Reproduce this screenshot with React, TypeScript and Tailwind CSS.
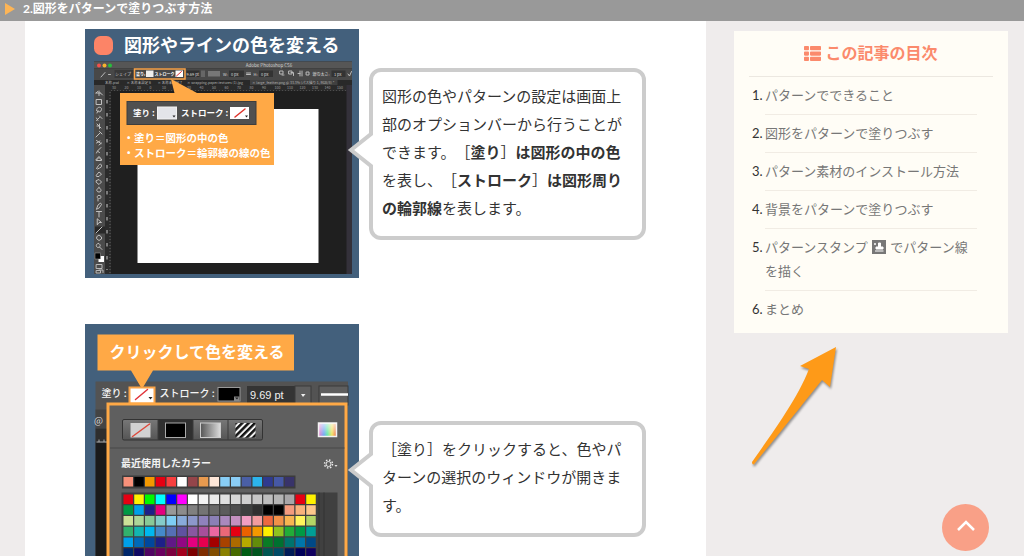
import React from "react";
import { FaThList } from "react-icons/fa";
import type { ReactNode } from "react";

const jp = "'Noto Sans CJK JP', sans-serif";

const recent = [
  "#f8917a", "#000000", "#f39800", "#e60012", "#f8403f", "#ffffff", "#94454a", "#e89a4f",
  "#fde6d8", "#88cdf5", "#8acdf6", "#4a5fa6", "#2cb4ec", "#2f3a8f", "#4658a5", "#38336a",
];

const palette: string[][] = [
  ["#e60012", "#fff100", "#00f800", "#00ffff", "#0000ff", "#ff00ff", "#ffffff", "#f2f2f2", "#e9e9e9", "#e0e0e0", "#d8d8d8", "#cfcfcf", "#c6c6c6", "#bdbdbd", "#b4b4b4", "#a8a6a8", "#e60012", "#fff100"],
  ["#009944", "#00a0e9", "#1d2088", "#e4007f", "#989898", "#8c8c8c", "#808080", "#747474", "#686868", "#5c5c5c", "#4e4e4e", "#3e403f", "#303030", "#000000", "#000000", "#f39b7e", "#f8b27c", "#fcc68b"],
  ["#cce198", "#acd598", "#89c997", "#84ccc9", "#7ecef4", "#88abda", "#8c97cb", "#8f82bc", "#8b80b6", "#aa89bd", "#c490bf", "#f19ec2", "#f29c9f", "#ec6941", "#f19149", "#f8b551", "#fff45c", "#b3d465"],
  ["#32b16c", "#13b5b1", "#00b7ee", "#448aca", "#556fb5", "#5f52a0", "#8957a1", "#a74f9b", "#ea68a2", "#eb6877", "#e60012", "#eb6100", "#f39800", "#fff100", "#8fc31f", "#22ac38", "#009944", "#009e96"],
  ["#00a0e9", "#0068b7", "#00479d", "#1d2088", "#601986", "#920783", "#e4007f", "#e5004f", "#a40000", "#a84200", "#ac6a00", "#b7aa00", "#638c0b", "#097c25", "#007130", "#00736d", "#0075a9", "#004986"],
  ["#00276b", "#100964", "#500563", "#6a005f", "#7d003f", "#a4001e", "#7d0000", "#7f2d00", "#834e00", "#8a8000", "#486a00", "#005e15", "#00561f", "#005752", "#004c66", "#001c58", "#00005a", "#100060"],
  ["#c7b299", "#998675", "#736357", "#534741", "#362f2c", "#c69c6d", "#a67c52", "#8c6239", "#754c24", "#603913", "#42210b", "#333333", "#444444", "#555555", "#666666", "#777777", "#888888", "#999999"],
];

function Lines({ d, color = "#b9b9b9", width = 2 }: { d: string; color?: string; width?: number }) {
  return <path d={d} fill="none" stroke={color} strokeWidth={width} strokeLinecap="round" strokeLinejoin="round" />;
}

const tools = [
  "M-6-2h9m-3-4v9m-6-5l3-3m6 3l4 4",
  "M-5-5h10v10h-10z",
  "M-5 1c0-9 11-8 10-2s-8 6-7 2l-2 5",
  "M-5 5l6-6m0-3l5 5M-5 0l3 5",
  "M-4-4l8 8m-8-4h5v5m0-9v3",
  "M-6 6l8-8m-1-3l5 5",
  "M-5-3l9 6m-9-1l7-4m-2 8l5-4",
  "M-5 6l2-4 7-7m-6 8l3 2",
  "M-5 5h10v-3h-3v-4h-4v4h-3z",
  "M-5 5l4-6c6-8 9 4 2 5l-4 2",
  "M-5 2l5-6 5 4-5 5h-4z",
  "M-5-3l5-2 5 5-5 5-5-4z",
  "M0-5c-7 4-5 9 0 9s6-5 0-9",
  "M-2 6v-5c-5-5 3-9 6-4 1 4-3 4-4 4",
  "M-5 6l3-8 5-4 2 3-4 6z",
  "M-5-5h10M0-5v11",
  "M-3-6l8 7h-5l-3 4z",
  "M-6 6l12-12",
  "M-4-3l4-3 5 4v4l-5 3-4-3z",
  "M-2-5a4 4 0 1 0 1 0zm3 7l5 5",
];

function OptionsBarFigure() {
  return (
    <svg viewBox="0 0 548 498" className="w-[274px] shrink-0" role="img" aria-label="図形やラインの色を変える" fontFamily={jp}>
      <rect width="548" height="498" fill="#43607c" />
      <rect x="18" y="14" width="38" height="38" rx="13" fill="#fc8467" />
      <text x="78" y="46" fontSize="36" fontWeight="700" fill="#fff">図形やラインの色を変える</text>
      <rect x="18" y="65" width="516" height="425" fill="#1f1f1f" />
      <rect x="18" y="65" width="516" height="14" fill="#565656" />
      <circle cx="28" cy="73" r="4" fill="#f4504c" />
      <circle cx="39" cy="73" r="4" fill="#f5b32f" />
      <circle cx="50" cy="73" r="4" fill="#27bf3c" />
      <text x="368" y="76" textAnchor="middle" fontSize="9" fill="#d0d0d0">Adobe Photoshop CS6</text>
      <rect x="18" y="79" width="516" height="23" fill="#484848" />
      <Lines d="M32 96l8-9M47 91h4" />
      <rect x="59" y="82" width="38" height="16" fill="#383838" />
      <g fontSize="8" fill="#d5d5d5">
        <text x="60" y="93">シェイプ</text>
        <text x="102" y="93" fontWeight="700" fill="#fff">塗り:</text>
        <text x="139" y="93" fontWeight="700" fill="#fff">ストローク</text>
      </g>
      <rect x="122" y="83" width="15" height="13" fill="#eee" />
      <rect x="181" y="83" width="15" height="13" fill="#fff" />
      <Lines d="M183 94l10-9" color="#e03030" />
      <rect x="203" y="83" width="26" height="13" fill="#2f2f2f" />
      <rect x="232" y="83" width="8" height="13" fill="#666" />
      <rect x="246" y="84" width="24" height="11" fill="#777" />
      <rect x="288" y="83" width="30" height="13" fill="#333" />
      <rect x="348" y="83" width="28" height="13" fill="#333" />
      <rect x="493" y="83" width="28" height="13" fill="#333" />
      <g fontSize="8" fill="#ddd">
        <text x="203" y="93">9.69 pt</text>
        <text x="276" y="93">W:</text>
        <text x="292" y="93">0 px</text>
        <text x="337" y="93">H:</text>
        <text x="352" y="93">0 px</text>
        <text x="455" y="93">線の太さ:</text>
        <text x="498" y="93">1 px</text>
      </g>
      <Lines d="M323 88h8m-8 3h8M390 84h6v6h-6zm4 8h4M408 84h6v6h-6zm4 3h5v6M426 89h4m0-5v10m4-10v10M443 86h5v6h-5zM526 90l3 4 4-9" />
      <rect x="18" y="102" width="516" height="10" fill="#292929" />
      <rect x="330" y="102" width="175" height="10" fill="#404040" />
      <g fontSize="7" fill="#b4b4b4">
        <text x="40" y="110">名称.psd</text>
        <text x="83" y="110">× 名称未設定 6</text>
        <text x="145" y="110">× 名称未設定 7</text>
        <text x="204" y="110">× wrapping-paper-textures (1).jpg</text>
        <text x="334" y="110">× large_feather.png @ 33.3% (パス描り 1, RGB/8) *</text>
      </g>
      <rect x="40" y="112" width="486" height="12" fill="#2b2b2b" />
      <path d="M52 123h470" stroke="#717171" strokeWidth="2" strokeDasharray="1 5" />
      <g fontSize="7" fill="#a0a0a0">
        {[30, 20, 10, 0, 10, 20, 30, 40, 50, 60, 70, 80, 90, 100, 110, 120, 130, 140, 150].map((n, i) => (
          <text key={i} x={54 + i * 25} y="120">{n}</text>
        ))}
      </g>
      <rect x="18" y="112" width="22" height="378" fill="#4b4b4b" />
      <rect x="40" y="124" width="12" height="366" fill="#2b2b2b" />
      <path d="M50 126v362" stroke="#777" strokeWidth="3" strokeDasharray="1 5" />
      <path d="M44 142v340" stroke="#7b7b7b" strokeWidth="4" strokeDasharray="7 19" />
      <rect x="20" y="395" width="20" height="14" fill="#282828" />
      {tools.map((d, i) => (
        <g key={i} transform={`translate(28 ${130 + i * 16})`}>
          <Lines d={d} color="#c0c0c0" />
        </g>
      ))}
      <rect x="27" y="454" width="11" height="12" fill="#fff" />
      <rect x="20" y="448" width="11" height="12" fill="#000" stroke="#aaa" />
      <Lines d="M23 471h11v8h-11z" />
      <Lines d="M23 483h8v5h-8zM28 482h8v5" />
      <rect x="105" y="160" width="362" height="308" fill="#fff" />
      <rect x="523" y="112" width="11" height="378" fill="#34313a" />
      <rect x="99" y="80" width="101" height="20" fill="none" stroke="#f9a348" strokeWidth="3" />
      <path d="M172 100l52 28h154v144H70V128h109z" fill="#ffa946" />
      <rect x="84" y="145" width="258" height="46" fill="#505050" stroke="#3d3d3d" strokeWidth="2" />
      <g fontSize="17" fontWeight="700" fill="#fff">
        <text x="96" y="174">塗り :</text>
        <text x="192" y="174">ストローク :</text>
      </g>
      <rect x="145" y="156" width="38" height="24" fill="#e3e4e9" stroke="#f2f2f2" strokeWidth="2" />
      <path d="M175 173h6l-3 4z" fill="#222" />
      <rect x="290" y="156" width="38" height="24" fill="#fff" />
      <Lines d="M300 176l20-16" color="#dd332b" width={3} />
      <path d="M320 173h6l-3 4z" fill="#222" />
      <g fontSize="21" fontWeight="700" fill="#fff">
        <text x="77" y="226">・塗り＝図形の中の色</text>
        <text x="77" y="256">・ストローク＝輪郭線の線の色</text>
      </g>
    </svg>
  );
}

function SwatchPanelFigure() {
  return (
    <svg viewBox="0 0 548 620" className="w-[274px] shrink-0" role="img" aria-label="クリックして色を変える" fontFamily={jp}>
      <defs>
        <linearGradient id="fade"><stop stopColor="#555" /><stop offset="1" stopColor="#ddd" /></linearGradient>
        <linearGradient id="button" x2="0" y2="1"><stop stopColor="#777" /><stop offset="1" stopColor="#555" /></linearGradient>
        <linearGradient id="rainbow"><stop stopColor="#f077c5" /><stop offset=".3" stopColor="#68a2f4" /><stop offset=".5" stopColor="#62e5a2" /><stop offset=".75" stopColor="#f2e157" /><stop offset="1" stopColor="#f2664a" /></linearGradient>
        <linearGradient id="shine" x2="0" y2="1"><stop stopColor="#fff" stopOpacity=".7" /><stop offset="1" stopColor="#fff" stopOpacity="0" /></linearGradient>
        <pattern id="stripes" width="9" height="9" patternUnits="userSpaceOnUse" patternTransform="rotate(45)">
          <rect width="9" height="9" fill="#f4f4f4" /><rect width="5" height="9" fill="#111" />
        </pattern>
      </defs>
      <rect width="548" height="620" fill="#43607c" />
      <rect x="21" y="115" width="505" height="505" fill="#535353" />
      <rect x="21" y="171" width="24" height="38" fill="#444" />
      <rect x="21" y="209" width="24" height="28" fill="#2e2e2e" />
      <rect x="21" y="237" width="24" height="383" fill="#1a1a1a" />
      <path d="M23 236h21M28 231v5M38 231v5" stroke="#aaa" strokeWidth="2" />
      <text x="18" y="199" fontSize="19" fill="#ddd">@</text>
      <path d="M25 21h393v72H136l-22 37-22-37H25z" fill="#ffa946" />
      <text x="49" y="67" fontSize="32" fontWeight="700" fill="#fff">クリックして色を変える</text>
      <g fontSize="20" fontWeight="500" fill="#f4f4f4">
        <text x="33" y="146">塗り :</text>
        <text x="149" y="146">ストローク :</text>
      </g>
      <rect x="89" y="127" width="50" height="32" fill="#fff" stroke="#f9a348" strokeWidth="4" />
      <Lines d="M101 151l24-20" color="#e0343b" width={3} />
      <path d="M127 146h8l-4 5z" fill="#222" />
      <rect x="266" y="127" width="44" height="27" fill="#000" stroke="#999" strokeWidth="2" />
      <rect x="298" y="145" width="11" height="9" fill="#888" />
      <path d="M300 147h7l-3 4z" fill="#222" />
      <rect x="324" y="124" width="96" height="38" fill="#343434" />
      <rect x="420" y="124" width="32" height="38" fill="#5e5e5e" stroke="#3b3b3b" strokeWidth="2" />
      <path d="M432 140h9l-5 6z" fill="#eee" />
      <text x="330" y="149" fontFamily="'Liberation Sans', sans-serif" fontSize="22" fill="#f0f0f0">9.69 pt</text>
      <rect x="468" y="124" width="58" height="38" fill="#5e5e5e" stroke="#3b3b3b" strokeWidth="2" />
      <path d="M472 141h54" stroke="#fff" strokeWidth="5" />
      <rect x="46" y="160" width="476" height="480" fill="#5f5f5f" stroke="#ffa946" strokeWidth="6" />
      <rect x="75" y="191" width="280" height="41" rx="3" fill="url(#button)" stroke="#333" strokeWidth="2" />
      <rect x="146" y="191" width="70" height="41" fill="#303030" />
      <path d="M146 191v41M216 191v41M286 191v41" stroke="#3a3a3a" strokeWidth="2" />
      <rect x="91" y="198" width="40" height="29" fill="#d2d2d2" />
      <Lines d="M95 225l34-25" color="#dd4a3c" width={3} />
      <rect x="161" y="198" width="40" height="29" fill="#000" stroke="#aaa" strokeWidth="2" />
      <rect x="231" y="198" width="40" height="29" fill="url(#fade)" stroke="#ccc" strokeWidth="2" />
      <rect x="301" y="198" width="40" height="29" fill="url(#stripes)" />
      <rect x="467" y="198" width="36" height="27" fill="url(#rainbow)" stroke="#f2f2f2" strokeWidth="3" />
      <rect x="467" y="198" width="36" height="27" fill="url(#shine)" />
      <path d="M50 248h469" stroke="#494949" strokeWidth="2" />
      <text x="72" y="286" fontSize="20" fontWeight="700" fill="#f2f2f2">最近使用したカラー</text>
      <circle cx="487" cy="280" r="5" fill="none" stroke="#e8e8e8" strokeWidth="2" />
      <circle cx="487" cy="280" r="8" fill="none" stroke="#e8e8e8" strokeWidth="3" strokeDasharray="3 3.3" />
      <path d="M499 282h6l-3 4z" fill="#ddd" />
      <rect x="74" y="303" width="347" height="26" fill="#3c3c3c" />
      {recent.map((color, i) => (
        <rect key={i} x={77 + i * 21.5} y="306" width="19" height="19" fill={color} />
      ))}
      <rect x="73" y="337" width="432" height="283" fill="#404040" />
      <path d="M468 337v283M478 337v283" stroke="#333" strokeWidth="2" />
      {palette.map((row, r) =>
        row.map((color, i) => (
          <rect key={`${r}-${i}`} x={77 + i * 21.5} y={341 + r * 21.5} width="19" height="19" fill={color} />
        )),
      )}
    </svg>
  );
}

function SpeechBubble({ children }: { children: ReactNode }) {
  return (
    <div className="relative min-w-0 flex-1 rounded-xl border-4 border-[#ccc] bg-white px-[9px] pt-2.5 pb-3.5">
      <svg viewBox="0 0 26 36" className="absolute top-[60%] right-full -mt-[38px] h-9 w-[26px]" aria-hidden="true">
        <path d="M26 2H22L4 18l18 16h4z" fill="#fff" />
        <path d="M24 0v2L4 18l20 16v2" fill="none" stroke="#ccc" strokeWidth="4" />
      </svg>
      <p className="text-[15px] leading-7 text-[#333] [text-spacing-trim:space-all]">{children}</p>
    </div>
  );
}

function StampIcon() {
  return (
    <svg viewBox="0 0 14 14" className="mx-px inline-block size-3.5 align-[-2px]" role="img" aria-label="スタンプ">
      <rect width="14" height="14" fill="#777" />
      <path d="M6.5 3h2v4H11v2H4V7h2.500zM3 11h8.500" fill="#fff" stroke="#fff" strokeWidth="1" />
      <path d="M2 3h2v2H2z" fill="#ddd" />
    </svg>
  );
}

const contents: ReactNode[] = [
  "パターンでできること",
  "図形をパターンで塗りつぶす",
  "パターン素材のインストール方法",
  "背景をパターンで塗りつぶす",
  <>パターンスタンプ <StampIcon /> でパターン線を描く</>,
  "まとめ",
];

export default function App() {
  return (
    <div className="flex h-screen flex-col overflow-hidden bg-[#efecec] font-[Lato,'Noto_Sans_CJK_JP',sans-serif] text-[#333]">
      <header className="flex h-[21px] shrink-0 items-center gap-2 bg-[#999] px-[5px] pb-1">
        <svg viewBox="0 0 10 12" className="h-3 w-2.5" aria-hidden="true">
          <path d="M0 0l10 6-10 6z" fill="#fdb556" />
        </svg>
        <h1 className="text-xs leading-4 font-bold text-white">2.図形をパターンで塗りつぶす方法</h1>
      </header>

      <div className="flex min-h-0 flex-1 pl-[25px]">
        <main className="flex min-w-0 flex-1 flex-col gap-[46px] overflow-hidden bg-white px-[60px] pt-2">
          <section className="flex shrink-0 items-center gap-2.5">
            <OptionsBarFigure />
            <SpeechBubble>
              図形の色やパターンの設定は画面上部のオプションバーから行うことができます。［<strong>塗り</strong>］<strong>は図形の中の色</strong>を表し、［<strong>ストローク</strong>］<strong>は図形周りの輪郭線</strong>を表します。
            </SpeechBubble>
          </section>
          <section className="flex shrink-0 items-center gap-2.5">
            <SwatchPanelFigure />
            <SpeechBubble>［塗り］をクリックすると、色やパターンの選択のウィンドウが開きます。</SpeechBubble>
          </section>
        </main>

        <aside className="w-[318px] shrink-0 pt-2.5 pr-4 pl-7">
          <nav aria-labelledby="contents-title" className="bg-[#fffdf6] px-[15px] pt-2.5 pb-3">
            <h2 id="contents-title" className="flex items-center justify-center gap-1 border-b border-[#ece8e1] pb-[11px] text-base leading-6 font-bold text-[#fb8a6c]">
              <FaThList className="size-[17px]" aria-hidden="true" />
              この記事の目次
            </h2>
            <ol className="pr-4 pl-[3px] text-[13px] leading-6">
              {contents.map((item, i) => (
                <li key={i} className="flex">
                  <span className="w-[13px] shrink-0 pt-1.5 whitespace-nowrap">{i + 1}.</span>
                  <div className={i < contents.length - 1 ? "flex-1 border-b border-[#f1ece4] pt-1.5 pb-[7px]" : "flex-1 pt-1.5"}>
                    <a href="#" className="text-[#777]">{item}</a>
                  </div>
                </li>
              ))}
            </ol>
          </nav>
          <svg viewBox="0 0 90 124" className="mt-3 ml-[15px] h-[124px] w-[90px] overflow-visible drop-shadow-[1px_2px_1px_#0006]" aria-hidden="true">
            <path d="M87 2L51 21l9 3C49 53 22 90 3 117c0 3 2 3 3 1C29 90 49 65 73 35l8 7z" fill="#fe9a18" />
          </svg>
        </aside>
      </div>

      <button type="button" aria-label="ページの先頭へ" className="fixed right-[35px] bottom-[5px] flex size-[47px] items-center justify-center rounded-full bg-[#f9a087] pb-1">
        <svg viewBox="0 0 18 11" className="h-[11px] w-[18px]" fill="none" stroke="#fff" strokeWidth="2.500" aria-hidden="true">
          <path d="M1 10l8-8 8 8" />
        </svg>
      </button>
    </div>
  );
}
